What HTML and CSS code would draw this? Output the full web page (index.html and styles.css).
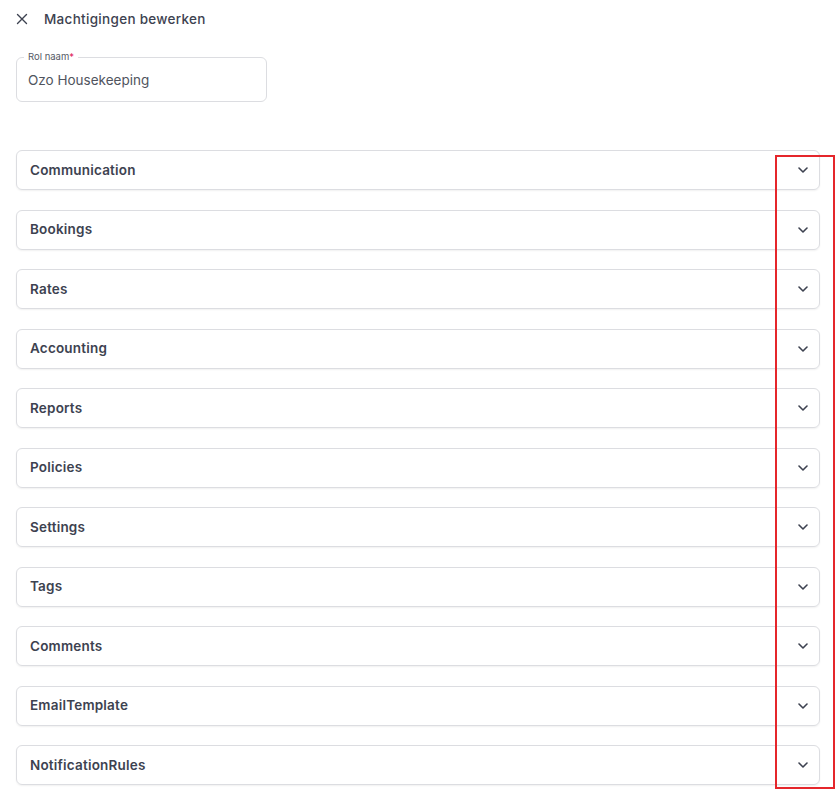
FILE: index.html
```html
<!DOCTYPE html>
<html lang="nl">
<head>
<meta charset="utf-8">
<title>Machtigingen bewerken</title>
<link rel="stylesheet" href="styles.css">
</head>
<body>
<div class="page">
  <header class="header">
    <svg class="close" width="12" height="12" viewBox="0 0 12 12"><path d="M1.5 1.5l9 9M10.5 1.5l-9 9" stroke="#3d4250" stroke-width="1.4" stroke-linecap="round"/></svg>
    <h1 class="title">Machtigingen bewerken</h1>
  </header>

  <div class="field">
    <span class="field-label">Rol naam<span class="req">*</span></span>
    <div class="field-value">Ozo Housekeeping</div>
  </div>

  <div class="list">
    <div class="row"><span>Communication</span><svg class="chev" viewBox="0 0 10 6"><path d="M1 1l4 4 4-4" fill="none" stroke="#3d4250" stroke-width="1.6" stroke-linecap="round" stroke-linejoin="round"/></svg></div>
    <div class="row"><span>Bookings</span><svg class="chev" viewBox="0 0 10 6"><path d="M1 1l4 4 4-4" fill="none" stroke="#3d4250" stroke-width="1.6" stroke-linecap="round" stroke-linejoin="round"/></svg></div>
    <div class="row"><span>Rates</span><svg class="chev" viewBox="0 0 10 6"><path d="M1 1l4 4 4-4" fill="none" stroke="#3d4250" stroke-width="1.6" stroke-linecap="round" stroke-linejoin="round"/></svg></div>
    <div class="row"><span>Accounting</span><svg class="chev" viewBox="0 0 10 6"><path d="M1 1l4 4 4-4" fill="none" stroke="#3d4250" stroke-width="1.6" stroke-linecap="round" stroke-linejoin="round"/></svg></div>
    <div class="row"><span>Reports</span><svg class="chev" viewBox="0 0 10 6"><path d="M1 1l4 4 4-4" fill="none" stroke="#3d4250" stroke-width="1.6" stroke-linecap="round" stroke-linejoin="round"/></svg></div>
    <div class="row"><span>Policies</span><svg class="chev" viewBox="0 0 10 6"><path d="M1 1l4 4 4-4" fill="none" stroke="#3d4250" stroke-width="1.6" stroke-linecap="round" stroke-linejoin="round"/></svg></div>
    <div class="row"><span>Settings</span><svg class="chev" viewBox="0 0 10 6"><path d="M1 1l4 4 4-4" fill="none" stroke="#3d4250" stroke-width="1.6" stroke-linecap="round" stroke-linejoin="round"/></svg></div>
    <div class="row"><span>Tags</span><svg class="chev" viewBox="0 0 10 6"><path d="M1 1l4 4 4-4" fill="none" stroke="#3d4250" stroke-width="1.6" stroke-linecap="round" stroke-linejoin="round"/></svg></div>
    <div class="row"><span>Comments</span><svg class="chev" viewBox="0 0 10 6"><path d="M1 1l4 4 4-4" fill="none" stroke="#3d4250" stroke-width="1.6" stroke-linecap="round" stroke-linejoin="round"/></svg></div>
    <div class="row"><span>EmailTemplate</span><svg class="chev" viewBox="0 0 10 6"><path d="M1 1l4 4 4-4" fill="none" stroke="#3d4250" stroke-width="1.6" stroke-linecap="round" stroke-linejoin="round"/></svg></div>
    <div class="row"><span>NotificationRules</span><svg class="chev" viewBox="0 0 10 6"><path d="M1 1l4 4 4-4" fill="none" stroke="#3d4250" stroke-width="1.6" stroke-linecap="round" stroke-linejoin="round"/></svg></div>
  </div>

  <div class="highlight"></div>
</div>
</body>
</html>
```

FILE: styles.css
```css
* { box-sizing: border-box; }
html, body { margin: 0; padding: 0; background: #fff; }
body {
  font-family: "Inter", "Open Sans", "Liberation Sans", sans-serif;
  color: #3d4250;
}
.page {
  position: relative;
  width: 836px;
  height: 793px;
  padding: 0 16px;
  overflow: hidden;
}
.header {
  display: flex;
  align-items: center;
  height: 38px;
}
.close {
  margin-right: 16px;
  width: 12px;
  height: 12px;
  flex: none;
}
.title {
  margin: 0;
  font-size: 13.5px;
  font-weight: 500;
  letter-spacing: 0.3px;
  color: #3d4250;
}
.field {
  position: relative;
  margin-top: 19px;
  width: 251px;
  height: 45px;
  border: 1px solid #dcdde1;
  border-radius: 6px;
  display: flex;
  align-items: center;
  padding-left: 11px;
}
.field-label {
  position: absolute;
  top: -7px;
  left: 7px;
  padding: 0 4px;
  background: #fff;
  font-size: 9.5px;
  line-height: 12px;
  color: #555a66;
}
.req { color: #e0245e; }
.field-value {
  font-size: 13.5px;
  color: #50545e;
  padding-top: 1px;
}
.list {
  margin-top: 48px;
  width: 804px;
  display: flex;
  flex-direction: column;
  gap: 19.5px;
}
.row {
  height: 40px;
  border: 1px solid #dcdde1;
  border-radius: 6px;
  box-shadow: 0 1px 2px rgba(0,0,0,0.06);
  display: flex;
  align-items: center;
  justify-content: space-between;
  padding: 0 11px 0 13px;
  font-size: 13.5px;
  font-weight: 600;
  letter-spacing: 0.2px;
  color: #3d4250;
}
.row span { padding-bottom: 1px; }
.chev { width: 10px; height: 6px; flex: none; }
.highlight {
  position: absolute;
  left: 775px;
  top: 155px;
  width: 60px;
  height: 634px;
  border: 2px solid #e5262b;
}
```
